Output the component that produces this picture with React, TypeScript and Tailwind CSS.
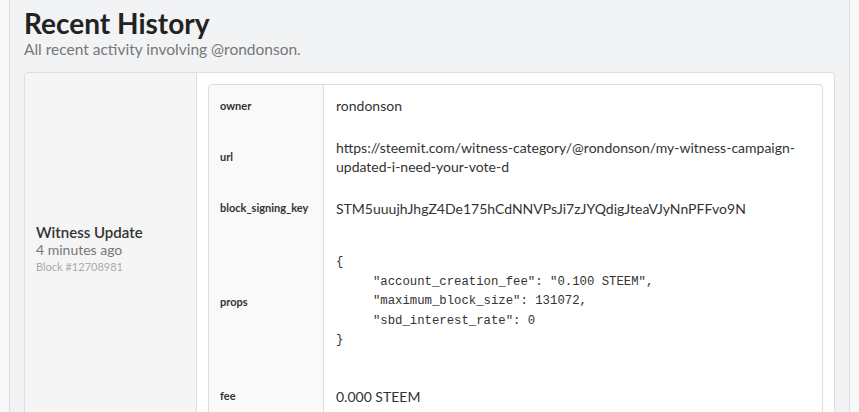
import React from 'react';

const rows: { key: string; value: React.ReactNode }[] = [
  { key: 'owner', value: 'rondonson' },
  {
    key: 'url',
    value: 'https://steemit.com/witness-category/@rondonson/my-witness-campaign-updated-i-need-your-vote-d',
  },
  { key: 'block_signing_key', value: 'STM5uuujhJhgZ4De175hCdNNVPsJi7zJYQdigJteaVJyNnPFFvo9N' },
  {
    key: 'props',
    value: (
      <pre className="pt-[13px] pb-[14px] font-['Liberation_Mono',monospace] text-[12.3px] leading-[19.5px] text-[#333]">
        {'{\n     "account_creation_fee": "0.100 STEEM",\n     "maximum_block_size": 131072,\n     "sbd_interest_rate": 0\n}'}
      </pre>
    ),
  },
  { key: 'fee', value: '0.000 STEEM' },
];

export default function App(): React.ReactNode {
  return (
    <div className="min-h-screen bg-[#f8f8f8] font-['Lato',sans-serif] text-[#333]">
      <div className="mx-[9px] min-h-screen border-x border-[#dcdcdc] bg-[#f2f3f5] px-[14px] pt-[6px] pb-6">
        <h1 className="text-[28px] font-bold leading-[34px] text-[#222]">Recent History</h1>
        <p className="text-[15.5px] leading-[18px] text-[#777]">All recent activity involving @rondonson.</p>

        <div className="mt-[14px] flex rounded-[4px] border border-[#dddddd] bg-white">
          <div className="flex w-[172px] shrink-0 items-center rounded-l-[4px] border-r border-[#dddddd] bg-[#f5f5f5] px-[11px] pb-[4px]">
            <div>
              <div className="text-[15px] font-semibold leading-[18px] text-[#333]">Witness Update</div>
              <div className="text-[14px] leading-[18px] text-[#777]">4 minutes ago</div>
              <div className="text-[11px] leading-[16px] text-[#aaa]">Block #12708981</div>
            </div>
          </div>

          <div className="flex-1 p-[11px]">
            <div className="grid grid-cols-[115px_1fr] overflow-hidden rounded-[4px] border border-[#dddddd]">
              {rows.map((row) => (
                <React.Fragment key={row.key}>
                  <div className="flex items-center border-r border-[#dddddd] bg-[#f9f9f9] px-[11px] text-[11px] font-bold text-[#333]">
                    {row.key}
                  </div>
                  <div className="px-3 py-[11px] text-[14px] leading-[19.5px] text-[#333]">{row.value}</div>
                </React.Fragment>
              ))}
            </div>
          </div>
        </div>
      </div>
    </div>
  );
}
